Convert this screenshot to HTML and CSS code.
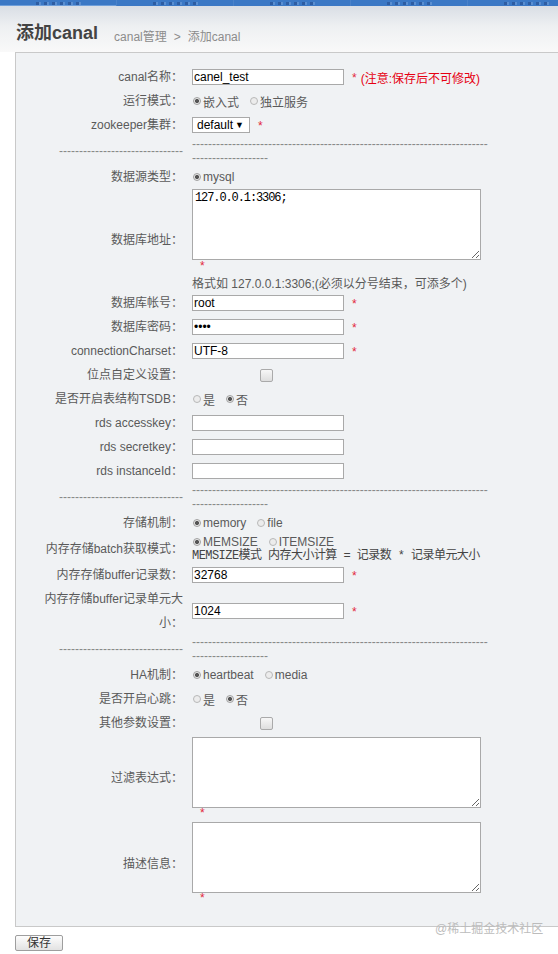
FILE: index.html
```html
<!DOCTYPE html>
<html lang="zh-CN">
<head>
<meta charset="utf-8">
<title>添加canal</title>
<link rel="stylesheet" href="styles.css">
</head>
<body>
<div class="topbar">
  <div class="nav-item active"><span class="frag"></span></div>
  <div class="nav-item"><span class="frag"></span></div>
  <div class="nav-item"><span class="frag"></span></div>
  <div class="nav-item"><span class="frag"></span></div>
  <div class="nav-item"><span class="frag"></span></div>
</div>
<div class="header">
  <h1 class="title">添加canal</h1>
  <div class="crumb">canal管理<span class="sep">&gt;</span>添加canal</div>
</div>
<form class="panel">
  <div class="row">
    <div class="lbl">canal名称：</div>
    <div class="val"><input class="txt" type="text" value="canel_test"><span class="req">*</span><span class="note">(注意:保存后不可修改)</span></div>
  </div>
  <div class="row">
    <div class="lbl">运行模式：</div>
    <div class="val"><label class="opt"><input class="rad" type="radio" name="mode" checked>嵌入式</label><label class="opt"><input class="rad" type="radio" name="mode">独立服务</label></div>
  </div>
  <div class="row">
    <div class="lbl">zookeeper集群：</div>
    <div class="val"><div class="select"><span>default</span><span class="arrow">▼</span></div><span class="req">*</span></div>
  </div>
  <div class="row dash-row">
    <div class="lbl dash-lbl">-------------------------------</div>
    <div class="val"><div class="dashes">---------------------------------------------------------------------------------------------</div></div>
  </div>
  <div class="row">
    <div class="lbl">数据源类型：</div>
    <div class="val"><label class="opt"><input class="rad" type="radio" name="src" checked>mysql</label></div>
  </div>
  <div class="row">
    <div class="lbl">数据库地址：</div>
    <div class="val stack">
      <textarea class="area">127.0.0.1:3306;</textarea>
      <div class="req-line tall">*</div>
      <div class="hint">格式如 127.0.0.1:3306;(必须以分号结束，可添多个)</div>
    </div>
  </div>
  <div class="row">
    <div class="lbl">数据库帐号：</div>
    <div class="val"><input class="txt" type="text" value="root"><span class="req">*</span></div>
  </div>
  <div class="row">
    <div class="lbl">数据库密码：</div>
    <div class="val"><input class="txt" type="password" value="root"><span class="req">*</span></div>
  </div>
  <div class="row">
    <div class="lbl">connectionCharset：</div>
    <div class="val"><input class="txt" type="text" value="UTF-8"><span class="req">*</span></div>
  </div>
  <div class="row">
    <div class="lbl">位点自定义设置：</div>
    <div class="val"><input class="chk" type="checkbox"></div>
  </div>
  <div class="row">
    <div class="lbl">是否开启表结构TSDB：</div>
    <div class="val"><label class="opt"><input class="rad" type="radio" name="tsdb">是</label><label class="opt"><input class="rad" type="radio" name="tsdb" checked>否</label></div>
  </div>
  <div class="row">
    <div class="lbl">rds accesskey：</div>
    <div class="val"><input class="txt" type="text"></div>
  </div>
  <div class="row">
    <div class="lbl">rds secretkey：</div>
    <div class="val"><input class="txt" type="text"></div>
  </div>
  <div class="row">
    <div class="lbl">rds instanceId：</div>
    <div class="val"><input class="txt" type="text"></div>
  </div>
  <div class="row dash-row">
    <div class="lbl dash-lbl">-------------------------------</div>
    <div class="val"><div class="dashes">---------------------------------------------------------------------------------------------</div></div>
  </div>
  <div class="row">
    <div class="lbl">存储机制：</div>
    <div class="val"><label class="opt"><input class="rad" type="radio" name="store" checked>memory</label><label class="opt"><input class="rad" type="radio" name="store">file</label></div>
  </div>
  <div class="row">
    <div class="lbl">内存存储batch获取模式：</div>
    <div class="val stack">
      <div class="line14"><label class="opt"><input class="rad" type="radio" name="batch" checked>MEMSIZE</label><label class="opt"><input class="rad" type="radio" name="batch">ITEMSIZE</label></div>
      <div class="line14 mono">MEMSIZE模式 内存大小计算 = 记录数 * 记录单元大小</div>
    </div>
  </div>
  <div class="row">
    <div class="lbl">内存存储buffer记录数：</div>
    <div class="val"><input class="txt" type="text" value="32768"><span class="req">*</span></div>
  </div>
  <div class="row">
    <div class="lbl">内存存储buffer记录单元大小：</div>
    <div class="val"><input class="txt" type="text" value="1024"><span class="req">*</span></div>
  </div>
  <div class="row dash-row">
    <div class="lbl dash-lbl">-------------------------------</div>
    <div class="val"><div class="dashes">---------------------------------------------------------------------------------------------</div></div>
  </div>
  <div class="row">
    <div class="lbl">HA机制：</div>
    <div class="val"><label class="opt"><input class="rad" type="radio" name="ha" checked>heartbeat</label><label class="opt"><input class="rad" type="radio" name="ha">media</label></div>
  </div>
  <div class="row">
    <div class="lbl">是否开启心跳：</div>
    <div class="val"><label class="opt"><input class="rad" type="radio" name="hb">是</label><label class="opt"><input class="rad" type="radio" name="hb" checked>否</label></div>
  </div>
  <div class="row">
    <div class="lbl">其他参数设置：</div>
    <div class="val"><input class="chk" type="checkbox"></div>
  </div>
  <div class="row">
    <div class="lbl">过滤表达式：</div>
    <div class="val stack pad-b">
      <textarea class="area gap2"></textarea>
      <div class="req-line">*</div>
    </div>
  </div>
  <div class="row">
    <div class="lbl">描述信息：</div>
    <div class="val stack pad-b">
      <textarea class="area gap1"></textarea>
      <div class="req-line">*</div>
    </div>
  </div>
</form>
<div class="footer"><button class="btn" type="button">保存</button></div>
<div class="watermark">@稀土掘金技术社区</div>
</body>
</html>
```
FILE: styles.css
```css
html, body {
  margin: 0;
  padding: 0;
  background: #ffffff;
  overflow: hidden;
}
body {
  font-family: "Liberation Sans", "Noto Sans CJK SC", sans-serif;
  font-size: 12px;
  color: #5a5a5a;
  position: relative;
  height: 954px;
}

/* top nav (mostly cut off) */
.topbar {
  height: 6px;
  background: #3b78c5;
  display: flex;
  overflow: hidden;
}
.nav-item {
  width: 117px;
  flex: none;
  box-sizing: border-box;
  padding-left: 36px;
  display: flex;
  align-items: flex-end;
  border-right: 1px solid rgba(255, 255, 255, 0.08);
}
.nav-item.active {
  box-shadow: inset 0 -1px 0 #6f9fda;
}
.frag {
  width: 48px;
  height: 3px;
  margin-bottom: 1px;
  background: repeating-linear-gradient(90deg, rgba(30, 60, 120, 0.45) 0 3px, rgba(150, 185, 230, 0.35) 3px 5px, transparent 5px 8px);
}

/* header */
.header {
  height: 46px;
  box-sizing: border-box;
  padding: 0 0 8px 16px;
  display: flex;
  align-items: flex-end;
  background: linear-gradient(#d9dee5, #eef0f2 45%, #f9f9f9);
}
.title {
  margin: 0;
  font-size: 18px;
  line-height: 22px;
  font-weight: bold;
  color: #444;
}
.crumb {
  margin-left: 16px;
  line-height: 14px;
  color: #8c8c8c;
}
.crumb .sep {
  margin: 0 7px;
}

/* form panel */
.panel {
  margin: 0 0 0 15px;
  border: 1px solid #c9c9c9;
  border-right: none;
  background: #f0f2f4;
  padding: 12px 0 20px 24px;
}
.row {
  display: grid;
  grid-template-columns: 144px 1fr;
  align-items: center;
  min-height: 24px;
}
.lbl {
  text-align: right;
  padding-right: 1px;
  line-height: 24px;
  color: #5a5a5a;
}
.val {
  padding-left: 8px;
  display: flex;
  align-items: center;
  min-height: 24px;
}
.val.stack {
  display: block;
}
.val.pad-b {
  padding-bottom: 3px;
}

.dash-row {
  min-height: 28px;
}
.dash-lbl {
  line-height: 14px;
  color: #888;
}
.dashes {
  width: 298px;
  word-break: break-all;
  line-height: 14px;
  color: #888;
}

.txt {
  box-sizing: border-box;
  width: 152px;
  height: 16px;
  margin: 0;
  padding: 0 1px;
  border: 1px solid #a9a9a9;
  background: #fff;
  font-family: "Liberation Sans", "Noto Sans CJK SC", sans-serif;
  font-size: 12px;
  color: #000;
  outline: none;
}
.req {
  color: #e3283c;
  margin-left: 8px;
  line-height: 12px;
  align-self: flex-start;
  margin-top: 7px;
}
.note {
  color: #e60012;
  margin-left: 4px;
}

.select {
  box-sizing: border-box;
  width: 58px;
  height: 16px;
  border: 1px solid #a9a9a9;
  background: #fff;
  color: #000;
  display: flex;
  align-items: center;
  justify-content: space-between;
  padding: 0 5px 0 4px;
  line-height: 14px;
}
.select .arrow {
  font-size: 9px;
}

.opt {
  display: inline-flex;
  align-items: center;
  margin-right: 10px;
  color: #5a5a5a;
}
.rad {
  appearance: none;
  -webkit-appearance: none;
  width: 8px;
  height: 8px;
  margin: 0 2px 0 1px;
  border: 1px solid #b8b8b8;
  border-radius: 50%;
  background: #ececec;
  box-sizing: border-box;
}
.rad:checked {
  background: radial-gradient(circle, #555 0 1.8px, #e6e6e6 2.3px);
  border-color: #a0a0a0;
}
.chk {
  appearance: none;
  -webkit-appearance: none;
  width: 13px;
  height: 13px;
  margin: 0 0 0 68px;
  border: 1px solid #aaa;
  border-radius: 2px;
  background: linear-gradient(#f7f7f7, #dedede);
  box-sizing: border-box;
}

.area {
  display: block;
  box-sizing: border-box;
  width: 289px;
  height: 71px;
  margin: 0;
  padding: 1px 2px;
  border: 1px solid #a9a9a9;
  background: #fff;
  font-family: "Liberation Mono", "Noto Sans CJK SC", monospace;
  font-size: 12px;
  letter-spacing: -1.1px;
  color: #000;
  outline: none;
}
.area.gap2 {
  margin-top: 2px;
}
.area.gap1 {
  margin-top: 1px;
}
.req-line {
  padding-left: 8px;
  line-height: 10px;
  height: 10px;
  color: #e3283c;
}
.req-line.tall {
  line-height: 12px;
  height: 12px;
}
.hint {
  margin-top: 5px;
  line-height: 14px;
  color: #5a5a5a;
}
.line14 {
  line-height: 14px;
  height: 14px;
  display: flex;
  align-items: center;
}
.mono {
  font-family: "Liberation Mono", "Noto Sans CJK SC", monospace;
  letter-spacing: -0.55px;
  color: #444;
}

.footer {
  padding: 8px 0 0 15px;
}
.btn {
  box-sizing: border-box;
  width: 48px;
  height: 16px;
  margin: 0;
  padding: 0;
  border: 1px solid #9e9e9e;
  border-radius: 2px;
  background: linear-gradient(#fdfdfd, #e2e2e2);
  font-family: "Liberation Sans", "Noto Sans CJK SC", sans-serif;
  font-size: 12px;
  line-height: 14px;
  color: #333;
}

.watermark {
  position: absolute;
  left: 435px;
  top: 921px;
  line-height: 16px;
  font-size: 12px;
  color: #bcbcbc;
}
```
